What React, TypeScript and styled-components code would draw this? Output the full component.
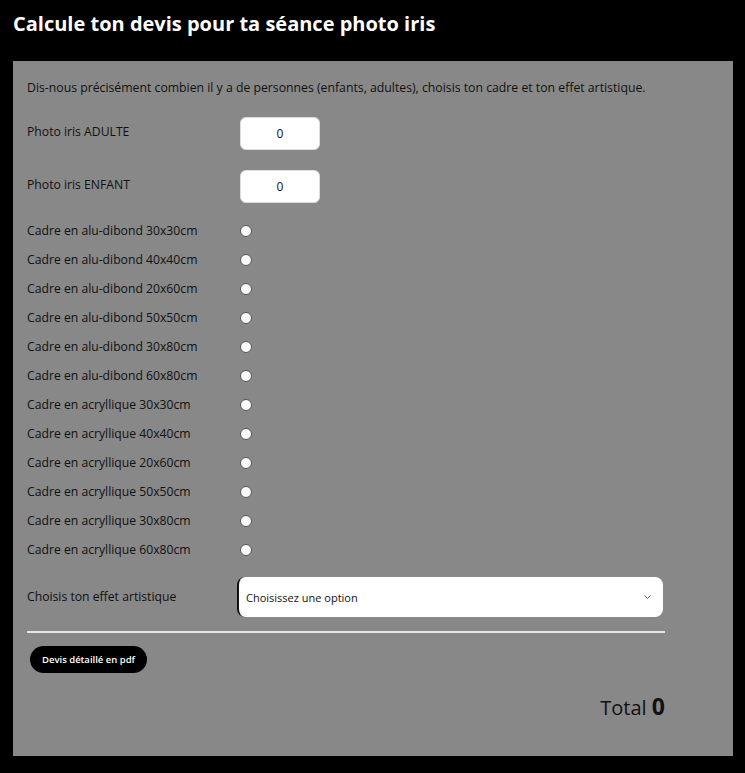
import React from "react";
import styled, { createGlobalStyle } from "styled-components";

const GlobalStyle = createGlobalStyle`
  html, body {
    margin: 0;
    padding: 0;
    background: #000;
  }
  body {
    font-family: "Open Sans", "Noto Sans", sans-serif;
    color: #111;
  }
`;

const Page = styled.div`
  background: #000;
  min-height: 773px;
  padding: 0 12px 17px 13px;
  box-sizing: border-box;
`;

const Title = styled.h1`
  margin: 0;
  padding: 11px 0 0;
  height: 61px;
  box-sizing: border-box;
  color: #fff;
  font-size: 20px;
  font-weight: 700;
  line-height: 26px;
`;

const Panel = styled.div`
  background: #888888;
  padding: 18px 14px 33px;
  box-sizing: border-box;
  height: 695px;
`;

const Form = styled.div`
  width: 638px;
  display: flex;
  flex-direction: column;
`;

const Intro = styled.p`
  margin: 0 0 20px;
  font-size: 12.25px;
  line-height: 18px;
`;

const Row = styled.div<{ $h: number; $gap?: number }>`
  display: flex;
  align-items: center;
  height: ${(p) => p.$h}px;
  margin-bottom: ${(p) => p.$gap ?? 0}px;
`;

const Label = styled.label<{ $w?: number }>`
  width: ${(p) => p.$w ?? 213}px;
  flex-shrink: 0;
  font-size: 12.2px;
  line-height: 18px;
  margin-top: -4px;
`;

const RadioLabel = styled(Label)`
  margin-top: 0;
`;

const NumberBox = styled.input`
  width: 80px;
  height: 33px;
  box-sizing: border-box;
  border: 1px solid #ddd;
  border-radius: 6px;
  background: #fff;
  text-align: center;
  font-family: "Open Sans", sans-serif;
  font-size: 12px;
  color: #111;
  padding: 0;
  outline: none;
`;

const Radio = styled.input`
  appearance: none;
  width: 12px;
  height: 12px;
  margin: 0;
  border-radius: 50%;
  border: 1px solid #555;
  background: #fafafa;
  box-sizing: border-box;
`;

const SelectWrap = styled.div`
  position: relative;
  width: 426px;
  height: 40px;
`;

const Select = styled.select`
  appearance: none;
  width: 100%;
  height: 100%;
  border: none;
  border-left: 2px solid #111;
  border-radius: 8px;
  background: #fff;
  padding: 0 0 0 7px;
  font-family: "Open Sans", sans-serif;
  font-size: 11px;
  color: #111;
  outline: none;
`;

const Chevron = styled.svg`
  position: absolute;
  right: 12px;
  top: 18px;
  pointer-events: none;
`;

const Divider = styled.hr`
  margin: 14px 0 0;
  border: none;
  height: 2px;
  background: #e6e6e6;
`;

const PdfButton = styled.button`
  align-self: flex-start;
  margin: 13px 0 0 3px;
  height: 27px;
  width: 117px;
  border: none;
  border-radius: 14px;
  background: #000;
  color: #fff;
  font-family: "Open Sans", sans-serif;
  font-size: 9.5px;
  font-weight: 600;
  padding: 0;
`;

const Total = styled.div`
  margin-top: 18px;
  text-align: right;
  font-size: 20px;
  line-height: 30px;
  color: #111;
`;

const TotalValue = styled.strong`
  font-size: 23px;
  font-weight: 700;
`;

const frames = [
  "Cadre en alu-dibond 30x30cm",
  "Cadre en alu-dibond 40x40cm",
  "Cadre en alu-dibond 20x60cm",
  "Cadre en alu-dibond 50x50cm",
  "Cadre en alu-dibond 30x80cm",
  "Cadre en alu-dibond 60x80cm",
  "Cadre en acryllique 30x30cm",
  "Cadre en acryllique 40x40cm",
  "Cadre en acryllique 20x60cm",
  "Cadre en acryllique 50x50cm",
  "Cadre en acryllique 30x80cm",
  "Cadre en acryllique 60x80cm",
];

export default function App() {
  return (
    <>
      <GlobalStyle />
      <Page>
        <Title>Calcule ton devis pour ta séance photo iris</Title>
        <Panel>
          <Form>
            <Intro>
              Dis-nous précisément combien il y a de personnes (enfants,
              adultes), choisis ton cadre et ton effet artistique.
            </Intro>
            <Row $h={33} $gap={20}>
              <Label>Photo iris ADULTE</Label>
              <NumberBox type="text" defaultValue="0" />
            </Row>
            <Row $h={33} $gap={13}>
              <Label>Photo iris ENFANT</Label>
              <NumberBox type="text" defaultValue="0" />
            </Row>
            {frames.map((f) => (
              <Row $h={29} key={f}>
                <RadioLabel>{f}</RadioLabel>
                <Radio type="radio" name="cadre" />
              </Row>
            ))}
            <Row $h={40} style={{ marginTop: 13 }}>
              <RadioLabel $w={210}>Choisis ton effet artistique</RadioLabel>
              <SelectWrap>
                <Select defaultValue="">
                  <option value="">Choisissez une option</option>
                </Select>
                <Chevron width="7" height="4" viewBox="0 0 7 4">
                  <path d="M0.5 0.5 L3.5 3.5 L6.5 0.5" fill="none" stroke="#444" strokeWidth="0.9" />
                </Chevron>
              </SelectWrap>
            </Row>
            <Divider />
            <PdfButton>Devis détaillé en pdf</PdfButton>
            <Total>
              Total <TotalValue>0</TotalValue>
            </Total>
          </Form>
        </Panel>
      </Page>
    </>
  );
}
